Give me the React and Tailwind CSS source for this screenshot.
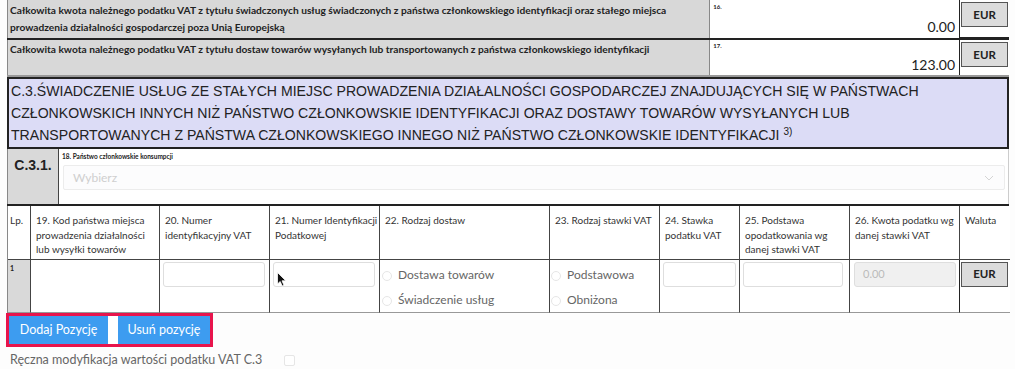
import React from "react";

const U = "[font-family:Lato,'Open_Sans',sans-serif]";

function EurBtn() {
  return (
    <div className="w-[47px] h-[25px] bg-[#dcdcdc] border border-[#555] flex items-center justify-center text-[11.5px] font-bold text-[#222] [font-family:Lato,sans-serif]">
      EUR
    </div>
  );
}

function Radio({ label }) {
  return (
    <div className="flex items-center h-[25px] gap-[6px]">
      <div className="w-[10px] h-[10px] rounded-full border border-[#e6e6e6] bg-white" />
      <span className="text-[12px] text-[#666]">{label}</span>
    </div>
  );
}

function Input({ w, disabled, value }) {
  return (
    <div
      className={`h-[25px] rounded-[3px] border border-[#dedede] ${disabled ? "bg-[#f0f0f0]" : "bg-white"} flex items-center px-[8px] text-[11px] text-[#bbb]`}
      style={{ width: w }}
    >
      {value}
    </div>
  );
}

export default function App() {
  return (
    <div className={`w-[1015px] h-[369px] overflow-hidden bg-[#fdfdfd] relative ${U}`}>
      <div className="ml-[7px] w-[1002px]">
        {/* Row 16 */}
        <div className="flex h-[38px] border-l border-[#888]">
          <div className="w-[702px] bg-[#d8d8d8] px-[2px] pt-[2px] text-[10.2px] font-bold leading-[17px] text-[#222]">
            Całkowita kwota należnego podatku VAT z tytułu świadczonych usług świadczonych z państwa członkowskiego identyfikacji oraz stałego miejsca prowadzenia działalności gospodarczej poza Unią Europejską
          </div>
          <div className="w-[251px] bg-white border-l border-[#888] border-r border-r-[#222] flex flex-col px-[3px]">
            <div className="text-[6px] font-bold leading-[8px] pt-[3px] text-[#222]">16.</div>
            <div className="text-right text-[14px] leading-[20px] text-[#222] pr-[1px] mt-[6px]">0.00</div>
          </div>
          <div className="w-[49px] pt-[2px] pl-[1px] bg-white border-b border-[#222]">
            <EurBtn />
          </div>
        </div>
        <div className="h-[2px] bg-[#222]" />
        {/* Row 17 */}
        <div className="flex h-[35px] border-l border-[#888]">
          <div className="w-[702px] bg-[#d8d8d8] px-[2px] pt-[1px] text-[10.2px] font-bold leading-[17px] text-[#222]">
            Całkowita kwota należnego podatku VAT z tytułu dostaw towarów wysyłanych lub transportowanych z państwa członkowskiego identyfikacji
          </div>
          <div className="w-[251px] bg-white border-l border-[#888] border-r border-r-[#222] flex flex-col px-[3px]">
            <div className="text-[6px] font-bold leading-[8px] pt-[2px] text-[#222]">17.</div>
            <div className="text-right text-[14px] leading-[20px] text-[#222] pr-[1px] mt-[5px]">123.00</div>
          </div>
          <div className="w-[49px] pt-[2px] pl-[1px] bg-white">
            <EurBtn />
          </div>
        </div>
        <div className="h-[2px] bg-[#999]" />
        {/* C.3 header */}
        <div className="border-2 border-[#222] bg-[#dcdcf6] px-[2px] py-[1px] text-[14.1px] leading-[22px] text-[#222] [font-family:'Liberation_Sans',Arial,sans-serif]">
          C.3.ŚWIADCZENIE USŁUG ZE STAŁYCH MIEJSC PROWADZENIA DZIAŁALNOŚCI GOSPODARCZEJ ZNAJDUJĄCYCH SIĘ W PAŃSTWACH
          <br />
          CZŁONKOWSKICH INNYCH NIŻ PAŃSTWO CZŁONKOWSKIE IDENTYFIKACJI ORAZ DOSTAWY TOWARÓW WYSYŁANYCH LUB
          <br />
          TRANSPORTOWANYCH Z PAŃSTWA CZŁONKOWSKIEGO INNEGO NIŻ PAŃSTWO CZŁONKOWSKIE IDENTYFIKACJI{" "}
          <sup className="text-[10px]">3)</sup>
        </div>
        {/* C.3.1 */}
        <div className="flex h-[55px] border-l border-[#888] border-r border-r-[#ccc]">
          <div className="w-[51px] bg-[#d9d9d9] border-r border-[#444] flex justify-center pt-[6px] text-[14px] font-bold text-[#222] [font-family:'Liberation_Sans',Arial,sans-serif]">
            C.3.1.
          </div>
          <div className="flex-1 bg-white pl-[3px] pr-[3px]">
            <div className="text-[6.5px] font-bold leading-[8px] pt-[4px] text-[#222]">18. Państwo członkowskie konsumpcji</div>
            <div className="mt-[4px] ml-[1px] h-[25px] border border-[#ececec] rounded-[2px] bg-[#fcfcfd] flex items-center justify-between px-[9px]">
              <span className="text-[12px] text-[#cfcfcf]">Wybierz</span>
              <svg width="10" height="6" viewBox="0 0 10 6" className="mr-[1px]">
                <path d="M1 1l4 4 4-4" fill="none" stroke="#d4d4d4" strokeWidth="1" />
              </svg>
            </div>
          </div>
        </div>
        <div className="h-[2px] bg-[#222]" />
        {/* Table */}
        <div className="grid grid-cols-[23px_129px_110px_110px_170px_110px_80px_110px_110px_50px] border-l border-[#888] border-r border-r-[#888] text-[10px] leading-[14.5px] text-[#333]">
          {[
            "Lp.",
            "19. Kod państwa miejsca prowadzenia działalności lub wysyłki towarów",
            "20. Numer identyfikacyjny VAT",
            "21. Numer Identyfikacji Podatkowej",
            "22. Rodzaj dostaw",
            "23. Rodzaj stawki VAT",
            "24. Stawka podatku VAT",
            "25. Podstawa opodatkowania wg danej stawki VAT",
            "26. Kwota podatku wg danej stawki VAT",
            "Waluta",
          ].map((t, i) => (
            <div
              key={i}
              className={`h-[54px] bg-white ${i === 0 ? "px-[2px]" : "pl-[5px] pr-[1px]"} pt-[7px] border-b border-[#444] ${i < 9 ? "border-r border-r-[#444]" : ""}`}
            >
              {t}
            </div>
          ))}
          {/* data row */}
          <div className="h-[53px] bg-[#d9d9d9] border-r border-[#444] border-b border-b-[#999] px-[2px] pt-[3px] text-[7px] font-bold text-[#222] leading-[10px]">1</div>
          <div className="h-[53px] bg-white border-r border-[#444] border-b border-b-[#999]" />
          <div className="h-[53px] bg-white border-r border-[#444] border-b border-b-[#999] pl-[3px] pt-[2px]">
            <Input w={102} />
          </div>
          <div className="h-[53px] bg-white border-r border-[#444] border-b border-b-[#999] pl-[3px] pt-[2px]">
            <Input w={102} />
          </div>
          <div className="h-[53px] bg-white border-r border-[#444] border-b border-b-[#999] pl-[2px] pt-[3px]">
            <Radio label="Dostawa towarów" />
            <Radio label="Świadczenie usług" />
          </div>
          <div className="h-[53px] bg-white border-r border-[#444] border-b border-b-[#999] pl-[1px] pt-[3px]">
            <Radio label="Podstawowa" />
            <Radio label="Obniżona" />
          </div>
          <div className="h-[53px] bg-white border-r border-[#444] border-b border-b-[#999] pl-[3px] pt-[2px]">
            <Input w={73} />
          </div>
          <div className="h-[53px] bg-white border-r border-[#444] border-b border-b-[#999] pl-[3px] pt-[2px]">
            <Input w={100} />
          </div>
          <div className="h-[53px] bg-white border-r border-[#222] border-b border-b-[#999] pl-[4px] pt-[2px]">
            <Input w={102} disabled value="0.00" />
          </div>
          <div className="h-[53px] bg-white border-b border-[#999] pl-[1px] pt-[2px]">
            <EurBtn />
          </div>
        </div>
      </div>
      {/* Buttons */}
      <div className="ml-[6px] w-[207px] h-[34px] border-[3px] border-[#e8144c] flex gap-[10px] bg-white">
        <div className="w-[99px] bg-[#3d9cf0] flex items-center justify-center text-[12.5px] text-white">Dodaj Pozycję</div>
        <div className="flex-1 bg-[#3d9cf0] flex items-center justify-center text-[12.5px] text-white">Usuń pozycję</div>
      </div>
      <div className="flex items-center ml-[10px] mt-[4px] gap-[22px]">
        <span className="text-[12.5px] text-[#666]">Ręczna modyfikacja wartości podatku VAT C.3</span>
        <div className="w-[11px] h-[11px] border border-[#e6e6e6] rounded-[2px] bg-white" />
      </div>
      {/* cursor */}
      <svg className="absolute left-[277px] top-[272px]" width="10" height="16" viewBox="0 0 10 16">
        <path d="M0.5 0.5 L0.5 12 L3.2 9.5 L5.2 14 L7 13.2 L5 8.8 L8.8 8.8 Z" fill="#111" stroke="#fff" strokeWidth="0.8" />
      </svg>
    </div>
  );
}
